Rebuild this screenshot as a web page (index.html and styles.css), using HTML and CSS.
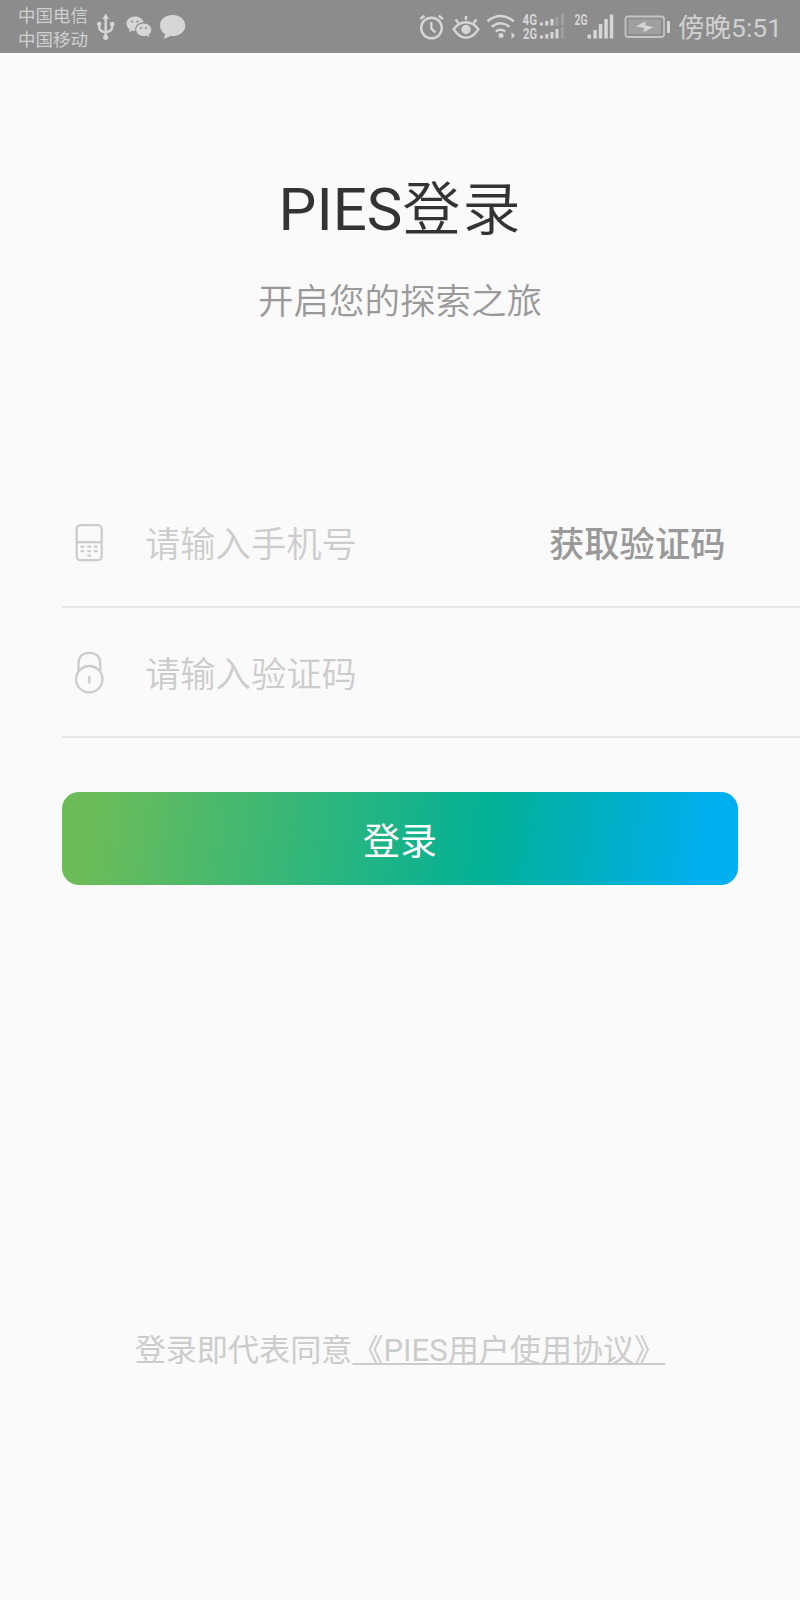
FILE: index.html
```html
<!DOCTYPE html>
<html lang="zh-CN">
<head>
    <meta charset="UTF-8">
    <meta name="viewport" content="width=device-width, initial-scale=1.0">
    <title>PIES登录</title>
    <link rel="stylesheet" href="styles.css">
</head>
<body>
    <header class="status-bar">
        <div class="carriers">
            <span>中国电信</span>
            <span>中国移动</span>
        </div>
        <!-- usb, wechat, message -->
        <svg class="notices" width="92" height="52" viewBox="96 0 92 52">
            <g class="line">
                <path d="M105.7 18V37M99.2 24V27.5Q99.2 31 105.7 32.5Q112.2 31 112.2 27V24"/>
            </g>
            <g class="solid">
                <path d="M105.7 13.5L109 19H102.4Z"/>
                <circle cx="105.7" cy="37.3" r="2.6"/>
                <circle cx="99.2" cy="24" r="2.2"/>
                <rect x="110.2" y="22" width="4" height="4"/>
                <path d="M135 16.5C130.2 16.5 126.5 19.6 126.5 23.7C126.5 26 127.7 28 129.6 29.3L128.9 32.2L132.3 30.5Q133.6 30.9 135.4 30.8C134.2 26 138.6 22 143.6 22.2C142.7 18.9 139.2 16.5 135 16.5Z"/>
                <path d="M143.5 23.5C139.3 23.5 136.2 26.3 136.2 29.8C136.2 33.4 139.5 36.1 143.5 36.1Q145.2 36.1 146.6 35.6L149.5 37.2L148.8 34.5C150.4 33.3 151.3 31.6 151.3 29.8C151.3 26.3 147.8 23.5 143.5 23.5Z"/>
                <path d="M172.5 15C165.3 15 160 19.6 160 25.5C160 29.3 162.2 32.4 165.3 34.3L163.7 39L170.4 35.9C178.6 36.9 185.3 32.2 185.3 25.7C185.3 19.6 179.8 15 172.5 15Z"/>
            </g>
            <g class="hole">
                <circle cx="132" cy="21.5" r="1.1"/>
                <circle cx="137.5" cy="21.5" r="1.1"/>
                <circle cx="141" cy="28" r="1"/>
                <circle cx="146" cy="28" r="1"/>
            </g>
        </svg>
        <!-- alarm, eye care, wifi, signals, battery -->
        <svg class="system" width="254" height="52" viewBox="418 0 254 52">
            <g class="line">
                <circle cx="431.5" cy="28" r="10.3"/>
                <path d="M431.3 22V28.5L435.5 32.5M420.3 19L424.5 15.7M438.7 15.7L443 19"/>
                <path d="M453.7 29.2Q459 22.3 466 22.3T478.5 29.2Q473 37.7 466 37.7T453.7 29.2Z"/>
                <path d="M466 16V20M455.5 19.5L458.3 23M476.5 19.5L473.7 23"/>
                <path d="M487.5 21.2Q500.5 10.8 513.8 21.2M491.7 26.7Q500.5 19.7 509.5 26.7M495.7 31.5Q500.5 28 505.3 31.5"/>
            </g>
            <g class="solid">
                <circle cx="466" cy="29.5" r="4.7"/>
                <circle cx="501" cy="35.5" r="2.5"/>
                <path d="M511.5 32V39L515 35.5Z"/>
                <path d="M540 22.5h3v3h-3zM545.3 21h3v4.5h-3zM550.5 19h3v6.5h-3z"/>
                <path d="M540 35.5h3v3h-3zM545.3 34h3v4.5h-3zM550.5 32h3v6.5h-3zM555.5 29h3v9.5h-3z"/>
                <path d="M587.5 34.5h3.5v4h-3.5zM593.3 30h3.5v8.5h-3.5zM598.8 24h3.5v14.5h-3.5zM604.3 19h3.5v19.5h-3.5zM609.8 14.5h3.5v24h-3.5z"/>
                <rect x="667" y="21" width="3" height="12" rx="1"/>
            </g>
            <g class="faint">
                <path d="M555.5 17h3v8.5h-3zM561 13.5h3v12h-3z"/>
                <path d="M561 27h3v11.5h-3z"/>
                <rect x="628.5" y="19.3" width="32.5" height="14.8"/>
            </g>
            <rect class="battery" x="625.5" y="16.5" width="38.5" height="20.5" rx="2.5"/>
            <path class="solid" d="M636 26.3L645.5 21.5L645 25.3L653.5 27.2L643.5 32L644.3 28Z"/>
            <g class="net">
                <text x="522.5" y="25.2" textLength="14.5" lengthAdjust="spacingAndGlyphs">4G</text>
                <text x="523" y="38.7" textLength="14" lengthAdjust="spacingAndGlyphs">2G</text>
                <text x="574.5" y="25.2" textLength="13" lengthAdjust="spacingAndGlyphs">2G</text>
            </g>
        </svg>
        <span class="clock">傍晚5:51</span>
    </header>

    <main class="login">
        <h1>PIES<span>登录</span></h1>
        <p class="subtitle">开启您的探索之旅</p>

        <form class="login-form">
            <div class="input-group">
                <svg class="icon" width="30" height="44" viewBox="0 0 30 44">
                    <rect x="2.7" y="6.2" width="25" height="35" rx="4"/>
                    <path d="M2.7 23.2H27.7"/>
                    <path d="M6.5 27.7H10.3M13.3 27.7H17.1M19.8 27.7H23.6M6.5 32.2H10.3M13.3 32.2H17.1M19.8 32.2H23.6M13.3 36.7H17.1"/>
                </svg>
                <input type="text" placeholder="请输入手机号">
                <button type="button" class="code-btn">获取验证码</button>
            </div>
            <div class="input-group">
                <svg class="icon" width="30" height="44" viewBox="0 0 30 44">
                    <circle cx="15.3" cy="29.2" r="13.2"/>
                    <path d="M4.5 21V13C4.5 6.5 9 2.8 15.3 2.8S26.2 6.5 26.2 13V21"/>
                    <path d="M15.3 26V33.5"/>
                </svg>
                <input type="text" placeholder="请输入验证码">
            </div>
            <button type="button" class="login-btn">登录</button>
        </form>

        <p class="agreement">登录即代表同意<a>《PIES用户使用协议》</a></p>
    </main>
</body>
</html>
```
FILE: styles.css
```css
* {
    margin: 0;
    padding: 0;
    box-sizing: border-box;
    font-family: Roboto, 'Noto Sans CJK SC', sans-serif;
}

body {
    min-height: 1600px;
    background-color: #fafafa;
    overflow-x: hidden;
}

.status-bar {
    display: flex;
    align-items: flex-start;
    height: 53px;
    padding-left: 18px;
    background-color: #8c8c8c;
    color: #d0d0d0;
}

.carriers {
    display: flex;
    flex-direction: column;
    width: 78px;
    padding-top: 4px;
    font-size: 17.5px;
    line-height: 24px;
    white-space: nowrap;
}

.system {
    margin-left: 230px;
}

.line {
    fill: none;
    stroke: #d6d6d6;
    stroke-width: 2.4;
}

.solid {
    fill: #d6d6d6;
}

.hole {
    fill: #8c8c8c;
}

.faint {
    fill: #a0a0a0;
}

.battery {
    fill: none;
    stroke: #c4c4c4;
    stroke-width: 1.8;
}

.net {
    fill: #d6d6d6;
    font-size: 14px;
    font-weight: 700;
}

.clock {
    margin-left: 6px;
    font-size: 26.5px;
    line-height: 56px;
    white-space: nowrap;
}

.login {
    padding-left: 62px;
}

h1 {
    margin: 117px 61px 0 0;
    font-size: 60px;
    font-weight: 400;
    line-height: 80px;
    text-align: center;
    color: #333;
}

h1 span {
    font-size: 58px;
    font-weight: 350;
    letter-spacing: 2px;
}

.subtitle {
    margin: 27px 62px 0 0;
    font-size: 35.5px;
    font-weight: 350;
    line-height: 50px;
    text-align: center;
    color: #999;
}

.login-form {
    margin-top: 150px;
}

.input-group {
    display: flex;
    align-items: center;
    height: 130.5px;
    padding-left: 12px;
    border-bottom: 2px solid #e6e6e6;
}

.icon {
    fill: none;
    stroke: #ccc;
    stroke-width: 2.3;
}

.input-group input {
    width: 380px;
    height: 60px;
    margin-left: 41px;
    padding-top: 7px;
    border: none;
    outline: none;
    background: none;
    font-size: 35.3px;
    font-weight: 350;
    color: #333;
}

.input-group input::placeholder {
    color: #ccc;
}

.code-btn {
    margin-left: 24px;
    padding-top: 7px;
    border: none;
    background: none;
    font-size: 35.3px;
    font-weight: 500;
    line-height: 60px;
    white-space: nowrap;
    color: #999;
}

.login-btn {
    display: block;
    width: 676px;
    height: 93px;
    margin-top: 54px;
    border: none;
    border-radius: 17px;
    background: linear-gradient(98deg, #6bbc59 5%, #02b196 63%, #00aff0 95%);
    font-size: 37px;
    font-weight: 400;
    color: #fff;
}

.agreement {
    margin: 446px 62px 0 0;
    font-size: 31.1px;
    line-height: 40px;
    text-align: center;
    white-space: nowrap;
    color: #ccc;
}

.agreement a {
    text-decoration: underline;
    text-decoration-thickness: 2px;
    text-decoration-skip-ink: none;
    text-underline-offset: 2px;
}
```
